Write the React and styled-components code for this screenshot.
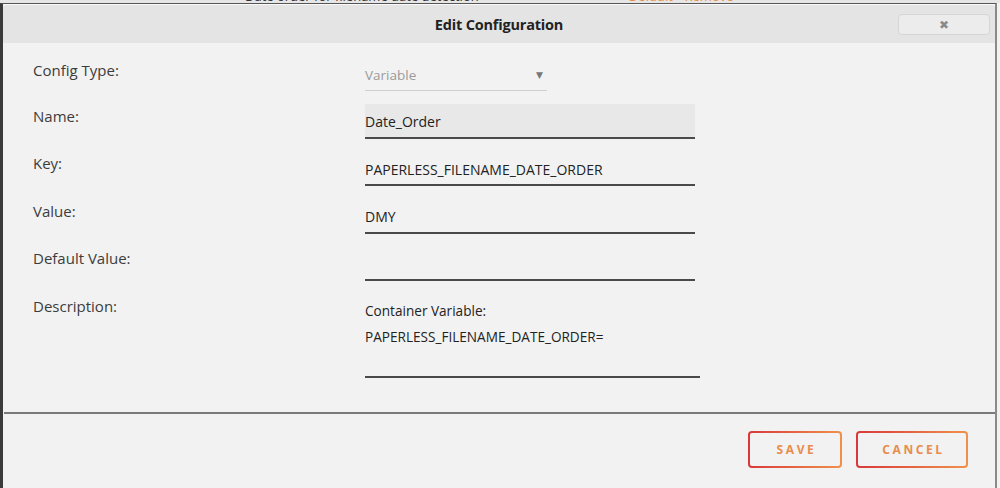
import React from 'react';
import styled, { createGlobalStyle } from 'styled-components';

const font = '"Open Sans", "Noto Sans", "Liberation Sans", sans-serif';

const GlobalStyle = createGlobalStyle`
  html, body {
    margin: 0;
    padding: 0;
    background: #f2f2f2;
    overflow: hidden;
  }
  * {
    box-sizing: border-box;
  }
`;

const Page = styled.div`
  width: 1000px;
  height: 488px;
  overflow: hidden;
  background: #f2f2f2;
  font-family: ${font};
`;

const Behind = styled.div`
  height: 3px;
  overflow: hidden;
  background: #e6e6e6;
  display: flex;
  gap: 150px;
  padding-left: 245px;
`;

const BehindText = styled.span`
  display: block;
  margin-top: -10px;
  font-size: 13px;
  line-height: 13px;
  white-space: nowrap;
  color: ${p => p.$accent ? '#e8904a' : '#333'};
`;

const Dialog = styled.div`
  width: 997px;
  height: 485px;
  border-top: 1px solid #555;
  border-left: 3px solid #3a3a3a;
  border-right: 2px solid #8a8a8a;
  background: #f2f2f2;
  display: flex;
  flex-direction: column;
`;

const Header = styled.div`
  height: 39px;
  background: #e4e4e4;
  border-top: 1px solid #fafafa;
  border-radius: 3px 3px 0 0;
  display: flex;
  align-items: center;
  justify-content: center;
  position: relative;
`;

const Title = styled.h1`
  margin: 0;
  font-size: 14.5px;
  font-weight: 700;
  color: #222;
  letter-spacing: -0.2px;
`;

const CloseButton = styled.button`
  position: absolute;
  right: 5px;
  top: 9px;
  width: 92px;
  height: 21px;
  border: 1px solid #d6d6d6;
  border-radius: 4px;
  background: #ececec;
  color: #8a8a8a;
  font-size: 12px;
  line-height: 1;
  padding: 0;
  font-family: "DejaVu Sans", sans-serif;
`;

const Form = styled.div`
  padding: 15px 0 0 30px;
  display: flex;
  flex-direction: column;
  gap: 12.5px;
  flex: 1;
`;

const Row = styled.div`
  display: flex;
  align-items: flex-start;
`;

const Label = styled.div`
  width: 332px;
  font-size: 15px;
  line-height: 24px;
  color: #3c3c3c;
`;

const Select = styled.div`
  width: 182px;
  height: 33px;
  border-bottom: 1px solid #d0d0d0;
  display: flex;
  align-items: center;
  justify-content: space-between;
  padding: 2px 4px 0 0;
  font-size: 13.5px;
  color: #9a9a9a;
`;

const Arrow = styled.span`
  font-size: 9px;
  color: #777;
  font-family: "DejaVu Sans", sans-serif;
`;

const Input = styled.div`
  width: 330px;
  height: 35px;
  background: ${p => p.$filled ? '#e8e8e8' : 'transparent'};
  border-bottom: 2px solid #4a4a4a;
  display: flex;
  align-items: center;
  padding-top: 3px;
  font-size: 14px;
  color: #222;
`;

const TextArea = styled.div`
  width: 335px;
  height: 84px;
  border-bottom: 2px solid #4a4a4a;
  padding-top: 4px;
  font-size: 13.6px;
  line-height: 26px;
  color: #222;
`;

const Divider = styled.hr`
  margin: 0 0 0 1px;
  border: none;
  border-top: 2px solid #7a7a7a;
`;

const Footer = styled.div`
  display: flex;
  justify-content: flex-end;
  gap: 14px;
  padding: 17px 27px 0 0;
  height: 74px;
`;

const Button = styled.button`
  height: 37px;
  width: ${p => p.$w}px;
  border: 2px solid transparent;
  border-radius: 4px;
  background:
    linear-gradient(#f2f2f2, #f2f2f2) padding-box,
    linear-gradient(90deg, #d9383a, #f0914a) border-box;
  color: #e88d4d;
  font-family: ${font};
  font-size: 12px;
  font-weight: 700;
  letter-spacing: 2.6px;
  padding: 0 0 0 3px;
`;

export default function App() {
  return (
    <Page>
      <GlobalStyle />
      <Behind>
        <BehindText>Date order for filename date detection</BehindText>
        <BehindText $accent>Default • Remove •</BehindText>
      </Behind>
      <Dialog>
        <Header>
          <Title>Edit Configuration</Title>
          <CloseButton>✖</CloseButton>
        </Header>
        <Form>
          <Row>
            <Label>Config Type:</Label>
            <Select>
              <span>Variable</span>
              <Arrow>▼</Arrow>
            </Select>
          </Row>
          <Row>
            <Label>Name:</Label>
            <Input $filled>Date_Order</Input>
          </Row>
          <Row>
            <Label>Key:</Label>
            <Input>PAPERLESS_FILENAME_DATE_ORDER</Input>
          </Row>
          <Row>
            <Label>Value:</Label>
            <Input>DMY</Input>
          </Row>
          <Row>
            <Label>Default Value:</Label>
            <Input />
          </Row>
          <Row>
            <Label>Description:</Label>
            <TextArea>
              Container Variable:
              <br />
              PAPERLESS_FILENAME_DATE_ORDER=
            </TextArea>
          </Row>
        </Form>
        <Divider />
        <Footer>
          <Button $w={94}>SAVE</Button>
          <Button $w={112}>CANCEL</Button>
        </Footer>
      </Dialog>
    </Page>
  );
}
